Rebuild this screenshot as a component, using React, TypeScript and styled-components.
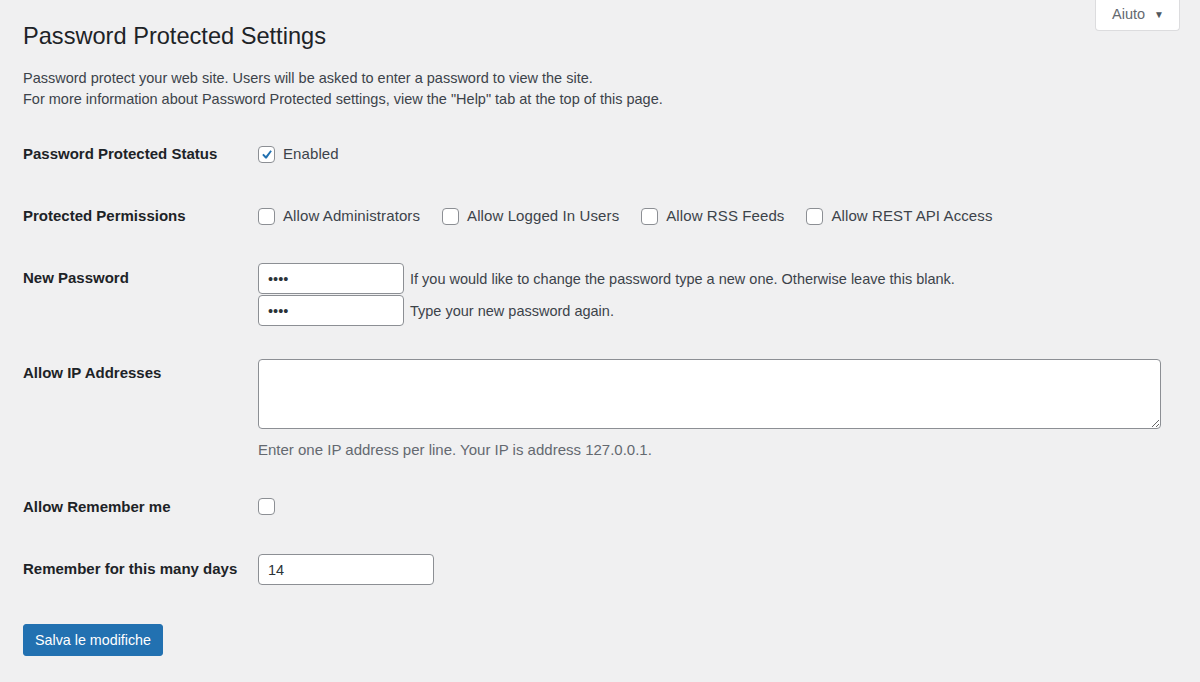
import React, { useState } from "react";
import styled, { createGlobalStyle } from "styled-components";

const Global = createGlobalStyle`
  html, body {
    margin: 0;
    background: #f0f0f1;
  }
  body {
    font-family: "Liberation Sans", Arial, sans-serif;
    color: #3c434a;
    font-size: 14px;
  }
`;

const Page = styled.div`
  width: 1200px;
  height: 682px;
  overflow: hidden;
  padding: 0 20px 0 23px;
  box-sizing: border-box;
`;

const Header = styled.div`
  display: flex;
  justify-content: space-between;
  align-items: flex-start;
`;

const Title = styled.h1`
  margin: 0;
  padding-top: 22px;
  font-size: 23.6px;
  font-weight: 400;
  line-height: 29px;
  color: #1d2327;
`;

const HelpTab = styled.button`
  display: flex;
  align-items: center;
  gap: 9px;
  height: 31px;
  padding: 0 15px 2px 16px;
  background: #fff;
  border: 1px solid #dcdcde;
  border-top: none;
  border-radius: 0 0 4px 4px;
  font-family: inherit;
  font-size: 14.5px;
  color: #646970;
`;

const Caret = styled.span`
  font-size: 10px;
  color: #50575e;
`;

const Intro = styled.p`
  margin: 17px 0 25px;
  line-height: 21px;
  font-size: 14.5px;
`;

const Row = styled.div<{ $h: number }>`
  display: grid;
  grid-template-columns: 235px 1fr;
  min-height: ${(p) => p.$h}px;
`;

const Label = styled.div`
  padding-top: 10px;
  line-height: 18px;
  font-weight: 700;
  font-size: 15px;
  color: #1d2327;
`;

const Field = styled.div<{ $top: number }>`
  padding-top: ${(p) => p.$top}px;
`;

const CheckGroup = styled.div`
  display: flex;
  align-items: center;
  gap: 22px;
`;

const CheckLabel = styled.label`
  display: flex;
  align-items: center;
  gap: 8px;
  line-height: 18px;
  font-size: 15px;
  letter-spacing: 0.1px;
  color: #3c434a;
  cursor: pointer;
`;

const Box = styled.span`
  width: 17px;
  height: 17px;
  box-sizing: border-box;
  border: 1px solid #8c8f94;
  border-radius: 4px;
  background: #fff;
  display: flex;
  align-items: center;
  justify-content: center;
`;

const Stack = styled.div`
  display: flex;
  flex-direction: column;
  gap: 1px;
`;

const InputLine = styled.div`
  display: flex;
  align-items: center;
  gap: 6px;
`;

const Input = styled.input<{ $w: number }>`
  width: ${(p) => p.$w}px;
  height: 31px;
  box-sizing: border-box;
  padding: 0 9px;
  border: 1px solid #8c8f94;
  border-radius: 4px;
  background: #fff;
  font-family: inherit;
  font-size: 14.5px;
  color: #2c3338;
  outline: none;
`;

const Hint = styled.span`
  font-size: 14.5px;
  color: #3c434a;
`;

const TextArea = styled.textarea`
  display: block;
  width: 903px;
  height: 70px;
  box-sizing: border-box;
  border: 1px solid #8c8f94;
  border-radius: 4px;
  background: #fff;
  resize: both;
  font-family: inherit;
  font-size: 14px;
  outline: none;
`;

const Note = styled.p`
  margin: 12px 0 0;
  line-height: 18px;
  font-size: 15px;
  color: #646970;
`;

const Submit = styled.button`
  margin-top: 12px;
  height: 32px;
  padding: 0 11px;
  background: #2271b1;
  border: 1px solid #2271b1;
  border-radius: 3px;
  color: #fff;
  font-family: inherit;
  font-size: 14.3px;
  cursor: pointer;
`;

function Checkbox({ checked, text, onToggle }: { checked: boolean; text?: string; onToggle: () => void }) {
  return (
    <CheckLabel onClick={onToggle}>
      <Box>
        {checked && (
          <svg width="17" height="17" viewBox="0 0 20 20">
            <path d="M15.2 4.2l1.9 1.3-6.8 9.9H8.5L4.3 10.6l1.8-1.6 3.1 2.9z" fill="#2271b1" />
          </svg>
        )}
      </Box>
      {text}
    </CheckLabel>
  );
}

export default function App() {
  const [enabled, setEnabled] = useState(true);
  const [perms, setPerms] = useState<Record<string, boolean>>({});
  const [remember, setRemember] = useState(false);
  const [days, setDays] = useState("14");

  const permissions = ["Allow Administrators", "Allow Logged In Users", "Allow RSS Feeds", "Allow REST API Access"];

  return (
    <Page>
      <Global />
      <Header>
        <Title>Password Protected Settings</Title>
        <HelpTab>
          Aiuto <Caret>▼</Caret>
        </HelpTab>
      </Header>
      <Intro>
        Password protect your web site. Users will be asked to enter a password to view the site.
        <br />
        For more information about Password Protected settings, view the "Help" tab at the top of this page.
      </Intro>

      <Row $h={62}>
        <Label>Password Protected Status</Label>
        <Field $top={10}>
          <Checkbox checked={enabled} text="Enabled" onToggle={() => setEnabled(!enabled)} />
        </Field>
      </Row>

      <Row $h={62}>
        <Label>Protected Permissions</Label>
        <Field $top={10}>
          <CheckGroup>
            {permissions.map((p) => (
              <Checkbox
                key={p}
                checked={!!perms[p]}
                text={p}
                onToggle={() => setPerms({ ...perms, [p]: !perms[p] })}
              />
            ))}
          </CheckGroup>
        </Field>
      </Row>

      <Row $h={95}>
        <Label>New Password</Label>
        <Field $top={4}>
          <Stack>
            <InputLine>
              <Input $w={146} type="password" defaultValue="1234" />
              <Hint>If you would like to change the password type a new one. Otherwise leave this blank.</Hint>
            </InputLine>
            <InputLine>
              <Input $w={146} type="password" defaultValue="1234" />
              <Hint>Type your new password again.</Hint>
            </InputLine>
          </Stack>
        </Field>
      </Row>

      <Row $h={134}>
        <Label>Allow IP Addresses</Label>
        <Field $top={5}>
          <TextArea />
          <Note>Enter one IP address per line. Your IP is address 127.0.0.1.</Note>
        </Field>
      </Row>

      <Row $h={62}>
        <Label>Allow Remember me</Label>
        <Field $top={10}>
          <Checkbox checked={remember} onToggle={() => setRemember(!remember)} />
        </Field>
      </Row>

      <Row $h={62}>
        <Label>Remember for this many days</Label>
        <Field $top={4}>
          <Input $w={176} type="text" value={days} onChange={(e) => setDays(e.target.value)} />
        </Field>
      </Row>

      <Submit>Salva le modifiche</Submit>
    </Page>
  );
}
